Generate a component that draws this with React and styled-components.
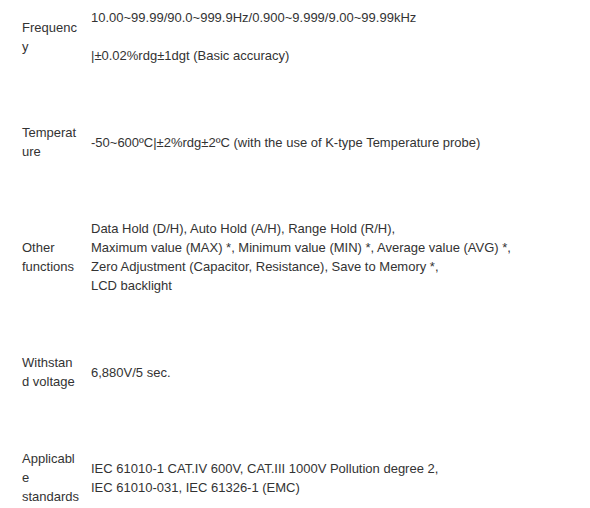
import React from "react";
import styled, { createGlobalStyle } from "styled-components";

const GlobalStyle = createGlobalStyle`
	body {
		margin: 0;
		background: #fff;
		font-family: Arial, "Liberation Sans", sans-serif;
	}
`;

const Page = styled.div`
	padding-left: 16px;
	overflow: hidden;
	height: 508px;
`;

const SpecTable = styled.table`
	margin-top: -21px; /* 화면 위쪽은 잘린 상태 */
	border-collapse: collapse;
	table-layout: fixed;
	width: 570px;
	font-size: 13px;
	line-height: 19px;
	color: #333;
`;

const LabelCell = styled.td`
	width: 58px;
	padding: 29px 6px;
	vertical-align: middle;
`;

const ValueCell = styled.td`
	padding: 29px 6px 29px 5px;
	vertical-align: middle;
`;

// 좁은 칸에서 단어가 잘리는 모양 그대로
const specs = [
	{
		label: ["Frequenc", "y"],
		lines: [
			"10.00~99.99/90.0~999.9Hz/0.900~9.999/9.00~99.99kHz",
			"",
			"|±0.02%rdg±1dgt (Basic accuracy)",
		],
	},
	{
		label: ["Temperat", "ure"],
		lines: ["-50~600ºC|±2%rdg±2ºC (with the use of K-type Temperature probe)"],
	},
	{
		label: ["Other", "functions"],
		lines: [
			"Data Hold (D/H), Auto Hold (A/H), Range Hold (R/H),",
			"Maximum value (MAX) *, Minimum value (MIN) *, Average value (AVG) *,",
			"Zero Adjustment (Capacitor, Resistance), Save to Memory *,",
			"LCD backlight",
		],
	},
	{
		label: ["Withstan", "d voltage"],
		lines: ["6,880V/5 sec."],
	},
	{
		label: ["Applicabl", "e", "standards"],
		lines: [
			"IEC 61010-1 CAT.IV 600V, CAT.III 1000V Pollution degree 2,",
			"IEC 61010-031, IEC 61326-1 (EMC)",
		],
	},
];

const Lines = ({ items }) =>
	items.map((line, i) => (
		<React.Fragment key={i}>
			{i > 0 && <br />}
			{line}
		</React.Fragment>
	));

function App() {
	return (
		<>
			<GlobalStyle />
			<Page>
				<SpecTable>
					<tbody>
						{specs.map((spec) => (
							<tr key={spec.label.join("")}>
								<LabelCell>
									<Lines items={spec.label} />
								</LabelCell>
								<ValueCell>
									<Lines items={spec.lines} />
								</ValueCell>
							</tr>
						))}
					</tbody>
				</SpecTable>
			</Page>
		</>
	);
}

export default App;
